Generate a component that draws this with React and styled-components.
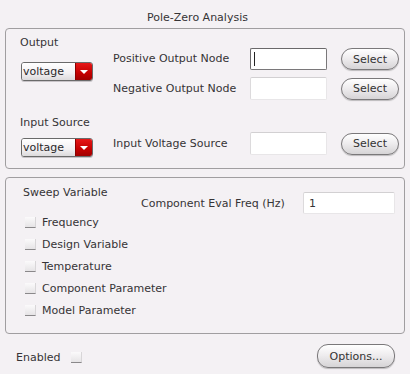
import React from 'react'
import styled, { createGlobalStyle } from 'styled-components'

const GlobalStyle = createGlobalStyle`
  html, body {
    margin: 0;
    padding: 0;
    background: #f4f1f4;
  }
  body {
    font-family: "DejaVu Sans", "Liberation Sans", sans-serif;
    font-size: 11px;
    color: #363436;
  }
`;

const Window = styled.div`
  width: 410px;
  height: 374px;
  box-sizing: border-box;
  background: #f4f1f4;
  padding: 11px 5px 0 5px;
  display: flex;
  flex-direction: column;
`;

const Title = styled.div`
  text-align: center;
  padding-right: 15px;
  line-height: 14px;
  height: 17px;
`;

const Group = styled.div`
  border: 1px solid #a09ea0;
  border-radius: 4px;
  box-sizing: border-box;
  height: ${(p) => p.$height}px;
  margin-bottom: ${(p) => p.$gap || 0}px;
  display: flex;
`;

const LeftCol = styled.div`
  box-sizing: border-box;
  flex: 0 0 ${(p) => p.$width}px;
  min-width: 0;
  display: flex;
  flex-direction: column;
  padding-left: ${(p) => p.$pad || 14}px;
`;

const Label = styled.div`
  line-height: 14px;
  white-space: nowrap;
  margin-top: ${(p) => p.$top || 0}px;
`;

const Dropdown = styled.div`
  display: flex;
  width: 72px;
  height: 19px;
  box-sizing: border-box;
  border: 1px solid #6a6a6a;
  border-radius: 3px;
  overflow: hidden;
  margin-top: ${(p) => p.$top || 0}px;
  margin-left: 1px;
  box-shadow: 0 1px 0 #c8c4c8;
`;

const DropText = styled.div`
  flex: 1;
  background: linear-gradient(#ffffff, #f2f0f2 60%, #dcdadc);
  line-height: 17px;
  padding-left: 1px;
  color: #2a282a;
`;

const DropArrow = styled.div`
  width: 16px;
  background: linear-gradient(#e61818, #c40000 60%, #a00000);
  border-left: 1px solid #8a0000;
  display: flex;
  align-items: center;
  justify-content: center;

  &::after {
    content: "";
    border-left: 4px solid transparent;
    border-right: 4px solid transparent;
    border-top: 4px solid #fff;
    margin-top: 1px;
  }
`;

const NodeGrid = styled.div`
  display: grid;
  grid-template-columns: 123px 77px 58px;
  column-gap: 14px;
  align-content: start;
  align-items: center;
  padding-top: 19px;
`;

const RowLabel = styled.div`
  white-space: nowrap;
  line-height: 14px;
  margin-top: ${(p) => p.$top || 0}px;
`;

const TextField = styled.div`
  box-sizing: border-box;
  width: ${(p) => (p.$w ? `${p.$w}px` : 'auto')};
  height: ${(p) => p.$h || 22}px;
  background: #fff;
  border: 1px solid ${(p) => (p.$focus ? '#7a787a' : '#e8e6e8')};
  border-top-color: ${(p) => (p.$focus ? '#6a686a' : '#d2d0d2')};
  border-left-color: ${(p) => (p.$focus ? '#6a686a' : '#dcdadc')};
  border-radius: 2px;
  margin-top: ${(p) => p.$top || 0}px;
  padding-left: ${(p) => p.$pad ?? 3}px;
  display: flex;
  align-items: center;
`;

const Caret = styled.span`
  display: block;
  width: 1px;
  height: 14px;
  background: #222;
`;

const PillButton = styled.div`
  box-sizing: border-box;
  width: ${(p) => p.$w || 58}px;
  height: ${(p) => p.$h || 22}px;
  border: 1px solid #7a787a;
  border-radius: 11px;
  background: linear-gradient(#ffffff, #efedef 45%, #d6d4d6);
  box-shadow: 0 1px 1px #bcbabc;
  display: flex;
  align-items: center;
  justify-content: center;
  margin-top: ${(p) => p.$top || 0}px;
  color: #333;
`;

const CheckList = styled.div`
  display: flex;
  flex-direction: column;
  gap: 8px;
  margin-top: 15px;
  margin-left: 2px;
`;

const CheckRow = styled.div`
  display: flex;
  align-items: center;
  gap: 6px;
  height: 14px;
  white-space: nowrap;
`;

const Box = styled.span`
  flex: 0 0 11px;
  display: inline-block;
  width: 11px;
  height: 11px;
  box-sizing: border-box;
  background: linear-gradient(#fbfafb, #e6e4e6);
  border-bottom: 1px solid #8a888a;
  border-right: 1px solid #d8d6d8;
`;

const FreqArea = styled.div`
  display: flex;
  align-items: flex-start;
  padding-top: 14px;
`;

const FreqLabel = styled.div`
  width: 162px;
  white-space: nowrap;
  line-height: 14px;
  margin-top: 5px;
`;

const Footer = styled.div`
  display: flex;
  align-items: center;
  justify-content: space-between;
  padding: 10px 10px 0 11px;
`;

const Enabled = styled.div`
  display: flex;
  align-items: center;
  gap: 11px;
  margin-top: 2px;
`;

const Select = ({ top }) => (
  <Dropdown $top={top}>
    <DropText>voltage</DropText>
    <DropArrow />
  </Dropdown>
)

const App = () => {
  const sweep = ['Frequency', 'Design Variable', 'Temperature', 'Component Parameter', 'Model Parameter']
  return (
    <Window>
      <GlobalStyle />
      <Title>Pole-Zero Analysis</Title>
      <Group $height={141} $gap={8}>
        <LeftCol $width={107}>
          <Label $top={7}>Output</Label>
          <Select top={12} />
          <Label $top={35}>Input Source</Label>
          <Select top={8} />
        </LeftCol>
        <NodeGrid>
          <RowLabel>Positive Output Node</RowLabel>
          <TextField $focus>
            <Caret />
          </TextField>
          <PillButton>Select</PillButton>
          <RowLabel $top={7}>Negative Output Node</RowLabel>
          <TextField $h={23} $top={7} />
          <PillButton $top={7}>Select</PillButton>
          <RowLabel $top={32}>Input Voltage Source</RowLabel>
          <TextField $h={23} $top={32} />
          <PillButton $top={32}>Select</PillButton>
        </NodeGrid>
      </Group>
      <Group $height={157}>
        <LeftCol $width={135} $pad={17}>
          <Label $top={8}>Sweep Variable</Label>
          <CheckList>
            {sweep.map((s) => (
              <CheckRow key={s}>
                <Box />
                {s}
              </CheckRow>
            ))}
          </CheckList>
        </LeftCol>
        <FreqArea>
          <FreqLabel>Component Eval Freq (Hz)</FreqLabel>
          <TextField $w={92} $pad={5}>1</TextField>
        </FreqArea>
      </Group>
      <Footer>
        <Enabled>
          Enabled
          <Box />
        </Enabled>
        <PillButton $w={78} $h={24}>Options...</PillButton>
      </Footer>
    </Window>
  )
}

export default App
